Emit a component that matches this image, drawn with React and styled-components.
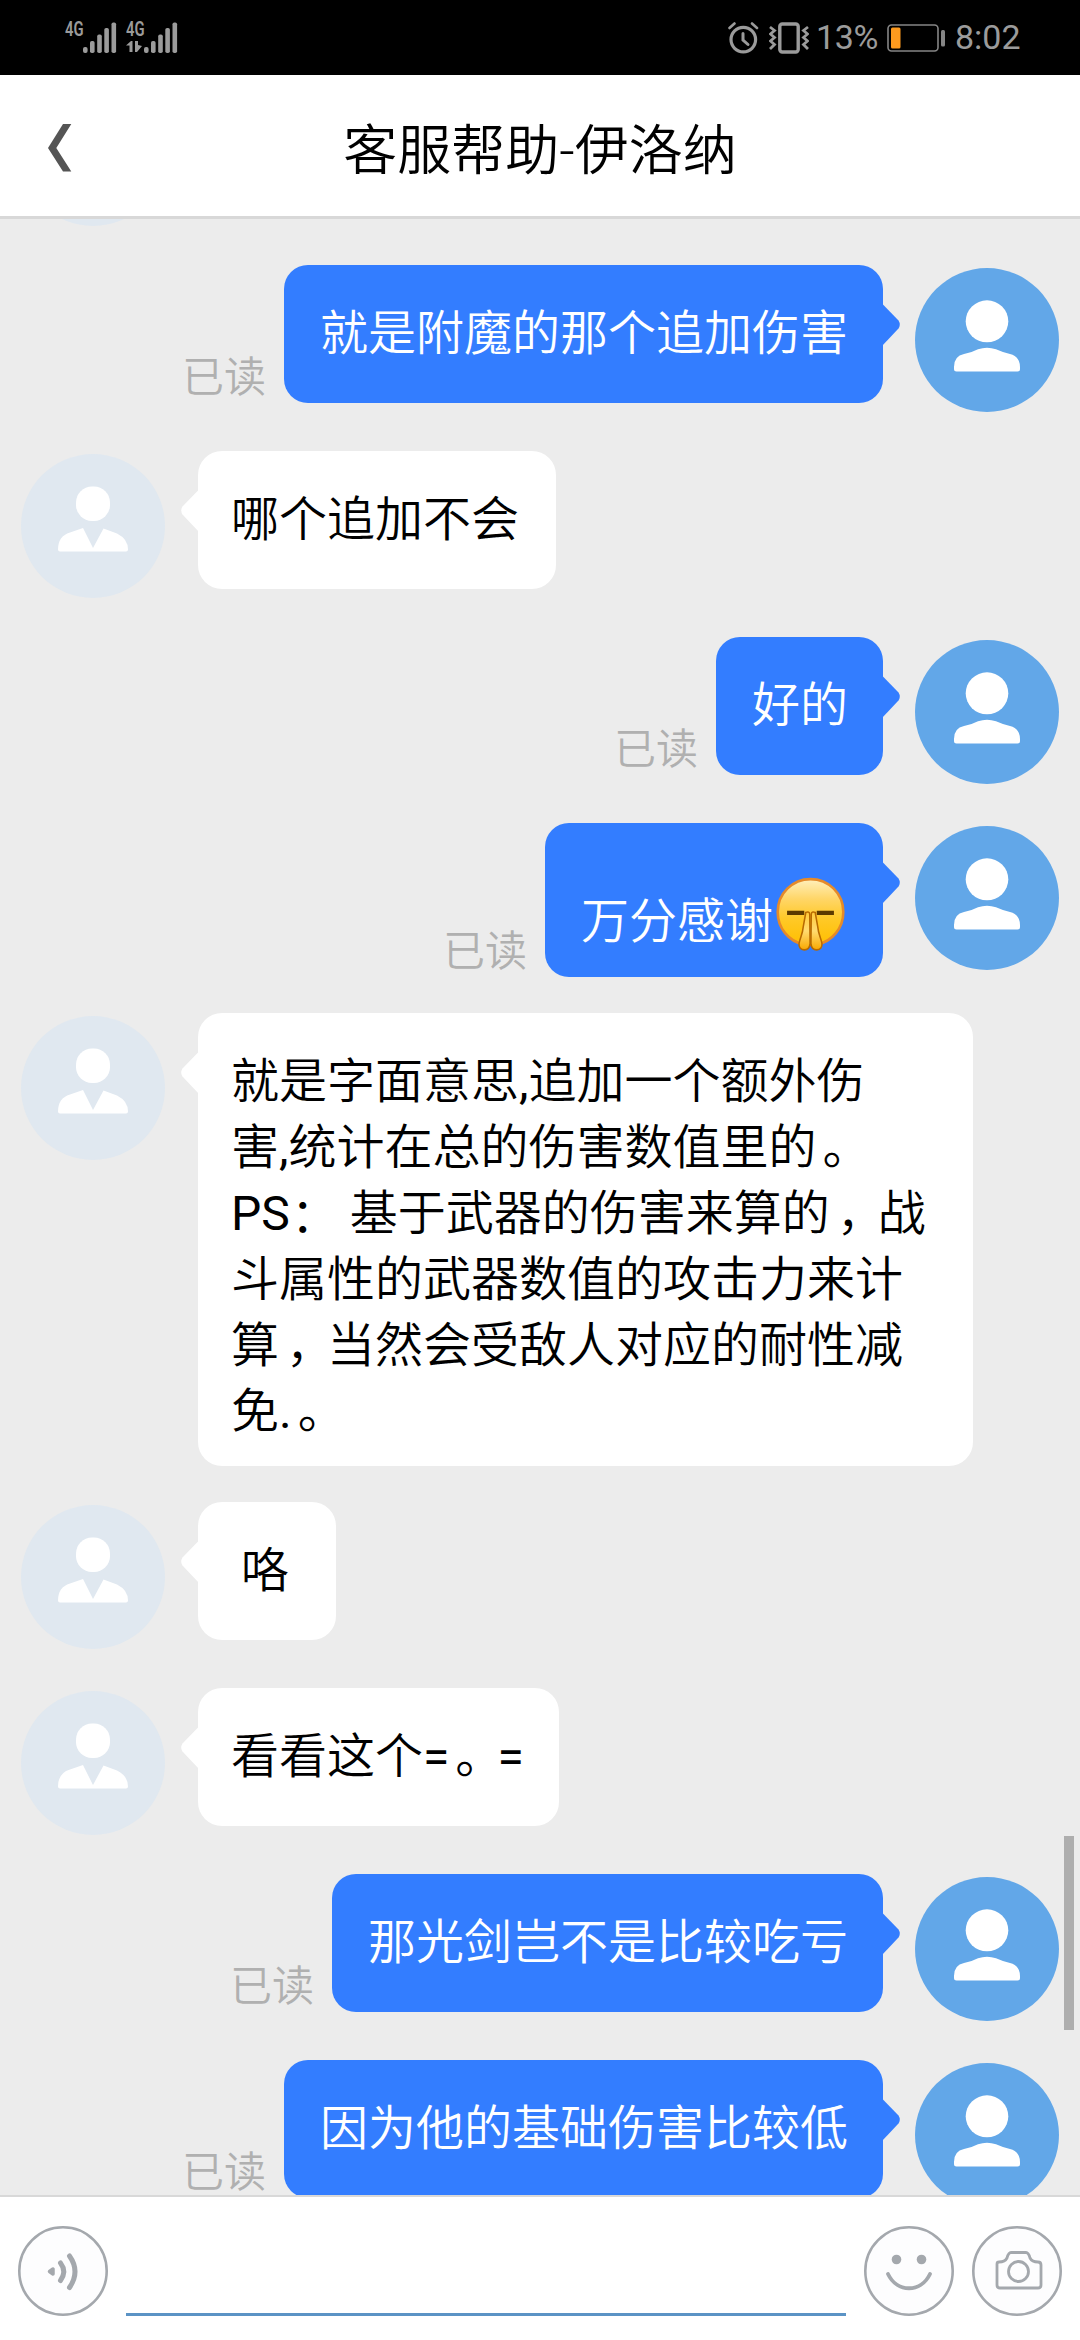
import React from 'react';
import styled, { createGlobalStyle } from 'styled-components';

const colors = {
    page: '#ececec',
    sent: '#337dff',
    received: '#ffffff',
    line: '#d8d8d8',
    status: '#9b9b9b',
    icon: '#a4a8ad',
    read: '#b0b0b0',
    input: '#5b93c5',
};

const GlobalStyle = createGlobalStyle`
    * {
        box-sizing: border-box;
    }
    body {
        margin: 0;
        font-family: Roboto, "Noto Sans CJK SC", sans-serif;
        font-weight: 350;
        color: #000;
    }
    svg {
        display: block;
        flex: none;
    }
`;

const Screen = styled.div`
    display: flex;
    flex-direction: column;
    width: 1080px;
    height: 2340px;
    overflow: hidden;
    background: #fff;
`;

const StatusBar = styled.div`
    display: flex;
    flex: none;
    justify-content: space-between;
    height: 75px;
    padding: 0 59px 0 65px;
    background: #000;
    color: ${colors.status};
    font: 400 34px/75px Roboto, sans-serif;
`;

const StatusGroup = styled.div`
    display: flex;
    align-items: center;
`;

const Percent = styled.span`
    width: 62px;
    margin: 0 9px 0 7px;
    letter-spacing: -0.4px;
`;

const Clock = styled.span`
    width: 66px;
    margin-left: 9px;
`;

const Header = styled.header`
    display: grid;
    flex: none;
    grid-template-columns: 120px 1fr 120px;
    align-items: center;
    height: 144px;
    border-bottom: 3px solid ${colors.line};
    h1 {
        margin: 0;
        padding-top: 13px;
        font-size: 54px;
        font-weight: 350;
        line-height: 80px;
        text-align: center;
        white-space: nowrap;
    }
    svg {
        margin: 4px 0 0 47px;
    }
`;

const Chat = styled.main`
    position: relative;
    flex: 1;
    min-height: 0;
    overflow: hidden;
    background: ${colors.page};
`;

/* the list is scrolled, so its first row sits mostly above the visible area */
const Messages = styled.div`
    display: flex;
    flex-direction: column;
    gap: 36px;
    margin-top: -140px;
    padding: 0 21px;
`;

const Row = styled.div`
    display: flex;
    flex: none;
    flex-direction: ${({ $mine }) => ($mine ? 'row-reverse' : 'row')};
    align-items: flex-start;
    min-height: 150px;
    > svg {
        margin-top: 3px;
    }
`;

const BubbleGroup = styled.div`
    display: flex;
    align-items: flex-end;
    gap: 18px;
    margin: ${({ $mine }) => ($mine ? '0 32px 0 0' : '0 0 0 33px')};
`;

const Bubble = styled.div`
    position: relative;
    width: ${({ $width }) => ($width ? `${$width}px` : 'auto')};
    min-width: 138px;
    min-height: 138px;
    padding: ${({ $mine }) => ($mine ? '36px 35px 21px 36px' : '36px 37px 21px 33px')};
    border-radius: 24px;
    background: ${({ $mine }) => ($mine ? colors.sent : colors.received)};
    color: ${({ $mine }) => ($mine ? '#fff' : '#000')};
    font-size: 48px;
    line-height: 66px;
    text-align: ${({ $align }) => $align || 'left'};
    white-space: pre;
`;

const Tail = styled.svg`
    position: absolute;
    top: 38px;
    ${({ $mine }) => ($mine ? 'right: -18px;' : 'left: -18px; transform: scaleX(-1);')}
`;

const Latin = styled.span`
    font-weight: 400;
`;

/* full width punctuation sits closer to the middle of its cell */
const Punct = styled.span`
    display: inline-block;
    height: 66px;
    padding-top: ${({ $y }) => $y || 0}px;
    padding-left: ${({ $x }) => $x || 6}px;
    letter-spacing: -${({ $x }) => $x || 6}px;
    vertical-align: top;
`;

const EmojiLine = styled.div`
    display: flex;
    height: 97px;
    padding-top: 18px;
    span {
        padding-top: 12px;
    }
`;

const ReadMark = styled.span`
    color: ${colors.read};
    font-size: 42px;
    line-height: 50px;
    white-space: nowrap;
`;

const ScrollThumb = styled.div`
    position: absolute;
    top: 1617px;
    right: 6px;
    width: 10px;
    height: 194px;
    background: #aeaeae;
`;

const Footer = styled.footer`
    display: flex;
    flex: none;
    align-items: flex-start;
    gap: 18px;
    height: 145px;
    padding: 29px 18px 0;
    border-top: 2px solid ${colors.line};
`;

const Input = styled.div`
    flex: 1;
    height: 90px;
    border-bottom: 3px solid ${colors.input};
`;

const SignalBars = () => (
    <svg width="34" height="32" viewBox="0 0 34 32" fill={colors.status}>
        <rect x="0" y="25" width="4.6" height="6" rx="2" />
        <rect x="7" y="19" width="4.6" height="12" rx="1.8" />
        <rect x="14.2" y="12.5" width="4.6" height="18.5" rx="1.8" />
        <rect x="21.3" y="6" width="4.6" height="25" rx="1.8" />
        <rect x="28.5" y="0.5" width="4.6" height="30.5" rx="1.8" />
    </svg>
);

const Network = styled.div`
    display: flex;
    margin-right: ${({ $gap }) => $gap || 0}px;
`;

const NetworkType = styled.div`
    display: flex;
    flex-direction: column;
    gap: 3px;
    width: 18px;
    height: 32px;
    font: 600 20px/15px Roboto, sans-serif;
    span {
        transform: scaleX(0.74);
        transform-origin: left;
    }
`;

const Signal = ({ gap, data }) => (
    <Network $gap={gap}>
        <NetworkType>
            <span>4G</span>
            {data && (
                <svg width="16" height="13" viewBox="0 0 16 13" fill={colors.status}>
                    <path d="M0 5.5 5 1H6.5V12H3.5V5.5ZM9 1H12V5L16 6 11 12H9Z" />
                </svg>
            )}
        </NetworkType>
        <SignalBars />
    </Network>
);

const AlarmIcon = () => (
    <svg width="31" height="32" viewBox="0 0 31 32" fill="none" stroke={colors.status} strokeLinecap="round">
        <circle cx="15.3" cy="17.6" r="12.3" strokeWidth="3.2" />
        <path d="M15 11.5V18L20 22.5" strokeWidth="3" />
        <path d="M1.5 6 6.5 1.5M29 6 24 1.5" strokeWidth="2.6" />
    </svg>
);

const VibrateIcon = () => (
    <svg width="40" height="32" viewBox="0 0 40 32" fill="none" stroke={colors.status}>
        <rect x="10.8" y="2" width="18.4" height="28" rx="2.5" strokeWidth="3.4" />
        <path d="M1 5 5.5 8.5 1.5 12 5.5 15.5 1.5 19 5.5 22.5 1 27M39 5 34.5 8.5 38.5 12 34.5 15.5 38.5 19 34.5 22.5 39 27" strokeWidth="2.8" />
    </svg>
);

const BatteryIcon = () => (
    <svg width="59" height="28" viewBox="0 0 59 28">
        <rect x="1" y="1" width="50" height="26" rx="3.5" fill="none" stroke="#858585" strokeWidth="1.6" />
        <rect x="4" y="3.5" width="9.5" height="21" rx="1.5" fill="#fd9a1e" />
        <rect x="54" y="6" width="4" height="16.5" rx="1.5" fill="#858585" />
    </svg>
);

const BackIcon = () => (
    <svg width="25" height="48" viewBox="0 0 25 48" fill="#555">
        <path d="M16 0H24.3L9.3 24 24.3 47.5H16L1 24Z" />
    </svg>
);

const MyAvatar = () => (
    <svg width="144" height="144" viewBox="0 0 144 144">
        <circle cx="72" cy="72" r="72" fill="#62a7e8" />
        <g fill="#fff">
            <ellipse cx="72" cy="53.3" rx="21.3" ry="21" />
            <path d="M39 101V99Q39 88 49 86Q57 84.5 63 81.3Q72 78 81 81.3Q88 84.5 95 86Q105 88.5 105 99V101Q105 103.5 102.5 103.5H41.5Q39 103.5 39 101Z" />
        </g>
    </svg>
);

const ServiceAvatar = () => (
    <svg width="144" height="144" viewBox="0 0 144 144">
        <circle cx="72" cy="72" r="72" fill="#e0e8f0" />
        <g fill="#fff">
            <rect x="55" y="32.5" width="34" height="34.5" rx="16" />
            <path d="M62 74 72 94 82.5 74.5 96 79.5Q107 85 107 95.5Q107 97.5 105 97.5H39Q37 97.5 37 95.5Q37 82 49 78.5Z" />
        </g>
    </svg>
);

const PrayEmoji = () => (
    <svg width="75" height="76" viewBox="1 2 72 73">
        <defs>
            <linearGradient id="face" x1="0" y1="0" x2="0" y2="1">
                <stop offset="0" stopColor="#fff0bd" />
                <stop offset="0.3" stopColor="#ffd668" />
                <stop offset="0.6" stopColor="#ffc928" />
                <stop offset="1" stopColor="#ffbf00" />
            </linearGradient>
            <linearGradient id="hand" x1="0" y1="0" x2="0" y2="1">
                <stop offset="0" stopColor="#ffcb3a" />
                <stop offset="0.5" stopColor="#ffdb70" />
                <stop offset="1" stopColor="#f9a800" />
            </linearGradient>
        </defs>
        <path d="M37 4C54.5 4 68.5 18 68.5 35.5C68.5 51 58 64 43 67H31C16 64 5.5 51 5.5 35.5C5.5 18 19.5 4 37 4Z" fill="url(#face)" stroke="#e58a2a" strokeWidth="2.5" />
        <path d="M14.5 36.5H31M43 36.5H59.5" stroke="#5c3a00" strokeWidth="4" />
        <g fill="url(#hand)" stroke="#b86a00" strokeWidth="1.5">
            <path d="M32.5 36Q36 34.5 36.3 38L36.6 66Q36 72 31 72Q25.500 71.500 26 66C27 60 29.500 57 30 50Z" />
            <path d="M41.500 36Q38 34.500 37.700 38L37.400 66Q38 72 43 72Q48.500 71.500 48 66C47 60 44.500 57 44 50Z" />
        </g>
    </svg>
);

const RoundIcon = ({ children }) => (
    <svg width="90" height="90" viewBox="0 0 90 90" fill="none" stroke={colors.icon} strokeLinecap="round" strokeLinejoin="round">
        <circle cx="45" cy="45" r="43.7" fill="#fdfdfe" strokeWidth="2.6" />
        {children}
    </svg>
);

const VoiceIcon = () => (
    <RoundIcon>
        <path d="M31.5 45.5 35 43V48Z" strokeWidth="3.5" fill={colors.icon} />
        <path d="M42.5 37Q49 45.5 42.5 54.5" strokeWidth="5" />
        <path d="M51.5 30Q62.5 45.5 51.5 61.5" strokeWidth="5" />
    </RoundIcon>
);

const SmileIcon = () => (
    <RoundIcon>
        <g fill={colors.icon} stroke="none">
            <circle cx="32.5" cy="33.5" r="4.8" />
            <circle cx="57.5" cy="33.5" r="4.8" />
        </g>
        <path d="M24 48C33 67 57 67 66 48" strokeWidth="3.8" />
    </RoundIcon>
);

const CameraIcon = () => (
    <RoundIcon>
        <path d="M27 36Q33 36 35 32Q36.5 26.5 39 26.5H54Q56.5 26.5 58 32Q60 36 66 36Q69 36 69 39V59Q69 62 66 62H28Q25 62 25 59V38Q25 36 27 36Z" strokeWidth="2.8" />
        <circle cx="46.5" cy="45.5" r="10" strokeWidth="2.8" />
    </RoundIcon>
);

function Message({ mine, width, align, children }) {
    return (
        <Row $mine={mine}>
            {mine ? <MyAvatar /> : <ServiceAvatar />}
            <BubbleGroup $mine={mine}>
                {mine && <ReadMark>已读</ReadMark>}
                <Bubble $mine={mine} $width={width} $align={align}>
                    {children}
                    <Tail $mine={mine} width="19" height="44" viewBox="0 0 19 44">
                        <path d="M0 0.5 16.5 17.5Q19 21.5 16.5 25.5L0 43Z" fill={mine ? colors.sent : colors.received} />
                    </Tail>
                </Bubble>
            </BubbleGroup>
        </Row>
    );
}

function App() {
    return (
        <>
            <GlobalStyle />
            <Screen>
                <StatusBar>
                    <StatusGroup>
                        <Signal gap={9} />
                        <Signal data />
                    </StatusGroup>
                    <StatusGroup>
                        <Network $gap={10}>
                            <AlarmIcon />
                        </Network>
                        <VibrateIcon />
                        <Percent>13%</Percent>
                        <BatteryIcon />
                        <Clock>8:02</Clock>
                    </StatusGroup>
                </StatusBar>
                <Header>
                    <BackIcon />
                    <h1>客服帮助-伊洛纳</h1>
                </Header>
                <Chat>
                    <Messages>
                        <Row>
                            <ServiceAvatar />
                        </Row>
                        <Message mine>就是附魔的那个追加伤害</Message>
                        <Message>哪个追加不会</Message>
                        <Message mine>好的</Message>
                        <Message mine>
                            <EmojiLine>
                                <span>万分感谢</span>
                                <PrayEmoji />
                            </EmojiLine>
                        </Message>
                        <Message width={775}>
                            <div>就是字面意思<Latin>,</Latin>追加一个额外伤</div>
                            <div>害<Latin>,</Latin>统计在总的伤害数值里的<Punct>。</Punct></div>
                            <div><Latin>PS</Latin><Punct $x={1} $y={2}>：</Punct><Latin> </Latin>基于武器的伤害来算的<Punct $x={7}>，</Punct>战</div>
                            <div>斗属性的武器数值的攻击力来计</div>
                            <div>算<Punct $x={7}>，</Punct>当然会受敌人对应的耐性减</div>
                            <div>免<Latin>.</Latin><Punct>。</Punct></div>
                        </Message>
                        <Message align="center">咯</Message>
                        <Message width={361}>
                            看看这个<Latin>=</Latin><Punct>。</Punct><Latin>=</Latin>
                        </Message>
                        <Message mine>那光剑岂不是比较吃亏</Message>
                        <Message mine>因为他的基础伤害比较低</Message>
                    </Messages>
                    <ScrollThumb />
                </Chat>
                <Footer>
                    <VoiceIcon />
                    <Input />
                    <SmileIcon />
                    <CameraIcon />
                </Footer>
            </Screen>
        </>
    );
}

export default App;
